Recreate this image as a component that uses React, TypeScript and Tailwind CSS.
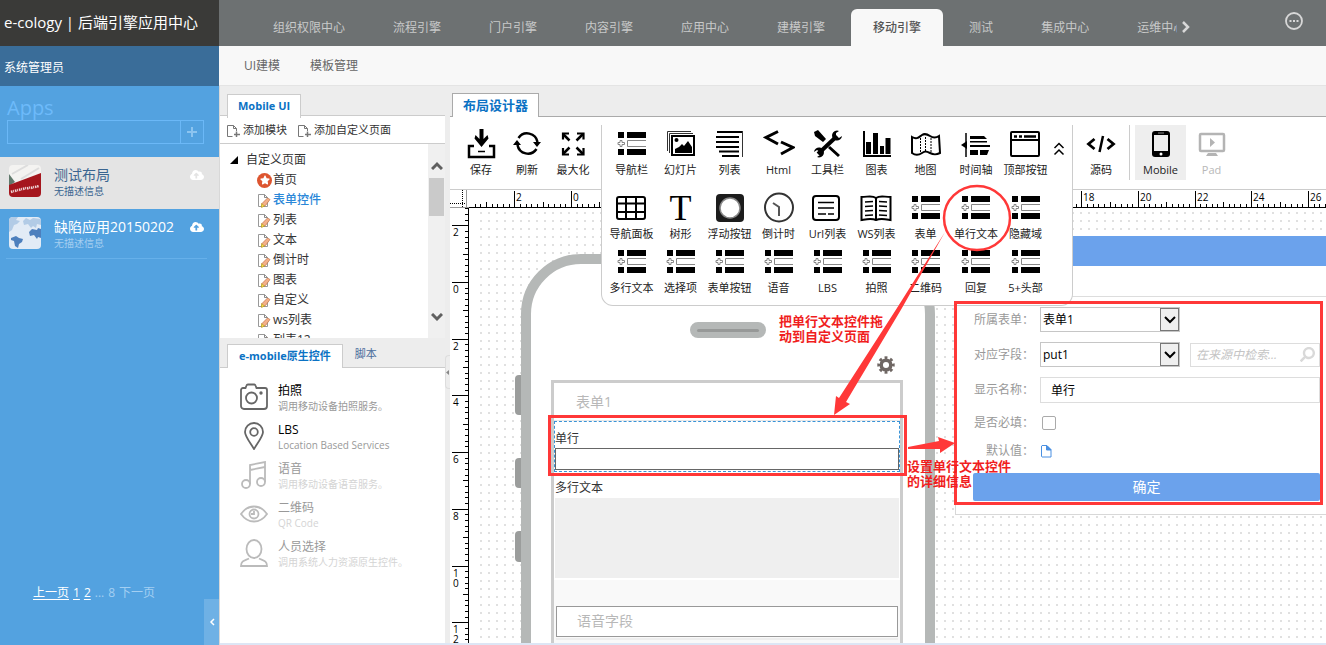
import React from "react";
import { FaStar, FaCloudUploadAlt, FaSearch } from "react-icons/fa";

const NAV_TABS = [
  "组织权限中心",
  "流程引擎",
  "门户引擎",
  "内容引擎",
  "应用中心",
  "建模引擎",
  "移动引擎",
  "测试",
  "集成中心",
  "运维中心",
];

const TREE_PAGES = [
  "表单控件",
  "列表",
  "文本",
  "倒计时",
  "图表",
  "自定义",
  "ws列表",
  "列表12",
];

/* ---------- icons ---------- */

interface IconProps {
  children: React.ReactNode;
}

const Icon32: React.FC<IconProps> = ({ children }) => (
  <svg viewBox="0 0 32 32" width="32" height="32" fill="none" className="shrink-0">
    {children}
  </svg>
);

const FieldIcon = () => (
  <Icon32>
    <path d="M2 4h6v6H2zM11 4h19v6H11zM2 21h6v6H2zM11 21h19v6H11z" fill="#000" />
    <path d="M30 12.500H11.500v6H30" stroke="#888" />
    <path d="M4 12.500h2v2h2.500v2H6v2H4v-2H2v-2h2z" stroke="#888" fill="#fff" />
  </Icon32>
);

const SaveIcon = () => (
  <Icon32>
    <path d="M9 18H4v11h25V18h-5" stroke="#000" strokeWidth="2.500" />
    <path d="M14.500 1h4v10l4-4 1 3.500-7 8.500-7-8.500 1-3.500 4 4z" fill="#000" />
    <path d="M13 23.500h7" stroke="#000" strokeWidth="1.500" />
  </Icon32>
);

const RefreshIcon = () => (
  <Icon32>
    <path d="M7.500 10A10.500 10.500 0 0 1 26.500 14" stroke="#000" strokeWidth="2.500" />
    <path d="M25.500 21A10.500 10.500 0 0 1 6.500 17" stroke="#000" strokeWidth="2.500" />
    <path d="M22 14h8l-4 5zM2 17h8l-4-5z" fill="#000" />
  </Icon32>
);

const MaximizeIcon = () => (
  <Icon32>
    <path
      d="M6 11.500V5.500h6M20 5.500h6.500v6M26.500 20v6.500H20M12 26.500H6V20"
      stroke="#000"
      strokeWidth="2.200"
    />
    <path
      d="M6 6l6.500 6.500M26 6l-6.500 6.500M26 26l-6.500-6.500M6 26l6.500-6.500"
      stroke="#000"
      strokeWidth="2.500"
    />
  </Icon32>
);

const SlidesIcon = () => (
  <Icon32>
    <path d="M2.500 23V3.500H26M4.500 25V5.500H28" stroke="#333" />
    <rect x="7" y="8" width="22" height="19" stroke="#000" strokeWidth="2" />
    <path d="M10 25v-4l4-2 3-3 2 2 4-5 4 6v6z" fill="#000" />
    <circle cx="11.500" cy="12" r="2" fill="#000" />
  </Icon32>
);

const ListIcon = () => (
  <Icon32>
    <path
      d="M3 4h26M2 9h23M2 14h23M2 19h23M5 23.500h20M8 28h17"
      stroke="#000"
      strokeWidth="2"
    />
    <path d="M28.500 3v26" stroke="#333" />
  </Icon32>
);

const HtmlIcon = () => (
  <Icon32>
    <path d="M15 3.500L3 9.500 15 16M18 14l12 5.500L18 26" stroke="#000" strokeWidth="3" />
  </Icon32>
);

const ToolsIcon = () => (
  <Icon32>
    <path d="M2 4l4-2 8 9-3 3-8-6zM18 18l10 9-2 2-10-9z" fill="#000" />
    <path d="M6 26L25 8" stroke="#000" strokeWidth="4" />
    <path
      d="M27 3a5 5 0 1 0 3 5l-3 2-3-2V5zM5 29a5 5 0 1 0-3-5l3-2 3 2v3z"
      fill="#000"
    />
  </Icon32>
);

const ChartIcon = () => (
  <Icon32>
    <path d="M3 3v25h27" stroke="#000" strokeWidth="2" />
    <path d="M5 14h5v12H5zM12 5h5v21h-5zM19 18h4v8h-4zM24.500 10h5v16h-5z" fill="#000" />
  </Icon32>
);

const MapIcon = () => (
  <Icon32>
    <path
      d="M2 9c5 3 7 0 10-2s5-1 8 1 6 2 9 0l1 17c-4 2-6 2-10 0s-5-2-8 0-6 3-10 0z"
      stroke="#000"
      strokeWidth="2"
    />
    <path d="M10.500 10v14M15.500 9v14M21 10v14" stroke="#000" strokeDasharray="2 1" />
  </Icon32>
);

const TimelineIcon = () => (
  <Icon32>
    <path d="M6 5v24" stroke="#000" strokeWidth="1.500" />
    <path d="M1 17l6-4v8z" fill="#000" />
    <path d="M10 8h14l3 3H10zM10 13h17v1.500H10zM10 17h20v2H10zM10 22h8v5h-8zM20 22h9l-2 5h-7z" fill="#000" />
  </Icon32>
);

const WindowIcon = () => (
  <Icon32>
    <rect x="1" y="4" width="28" height="24" rx="1" stroke="#000" strokeWidth="2" />
    <path d="M1 12h28" stroke="#000" strokeWidth="2" />
    <path d="M4 8.500h3M9 8.500h3M14 8.500h12" stroke="#000" strokeWidth="2.500" />
  </Icon32>
);

const TableIcon = () => (
  <Icon32>
    <rect x="1" y="5" width="28" height="22" rx="2" stroke="#000" strokeWidth="2" />
    <path d="M1 11.500h28M1 20h28M10 5v22M20 5v22" stroke="#000" strokeWidth="2" />
  </Icon32>
);

const TextIcon = () => (
  <span className="size-8 flex items-center justify-center font-['Liberation_Serif',serif] text-4xl text-black">
    T
  </span>
);

const FloatIcon = () => (
  <Icon32>
    <rect x="2" y="2" width="28" height="28" rx="4" fill="#1c1c1c" />
    <circle cx="16" cy="16" r="10" fill="#fff" stroke="#888" strokeWidth="1.500" />
  </Icon32>
);

const ClockIcon = () => (
  <Icon32>
    <circle cx="16" cy="15.500" r="14" stroke="#333" strokeWidth="2" />
    <path d="M10 11l6 4v9" stroke="#555" strokeWidth="2" />
  </Icon32>
);

const UrlIcon = () => (
  <Icon32>
    <rect x="2" y="4" width="26" height="24" rx="3" stroke="#000" strokeWidth="2" />
    <path d="M7 10.500h16M7 16h16M7 22h8M17 22h6" stroke="#000" strokeWidth="1.500" />
  </Icon32>
);

const BookIcon = () => (
  <Icon32>
    <path
      d="M16 6C12 3 8 5 1.500 5v23c6-1 10-2 14.500 0 4.500-2 8.500-1 14.500 0V5C24 5 20 3 16 6z"
      stroke="#000"
      strokeWidth="2"
    />
    <path d="M16 6v22" stroke="#000" strokeWidth="2" />
    <path
      d="M5 10l8-.5M5 14.500l8-.5M5 19l8-.5M5 23.500l8-.5M19 9.500l8 .5M19 14l8 .5M19 18.500l8 .5M19 23l8 .5"
      stroke="#000"
      strokeWidth="1.500"
    />
  </Icon32>
);

const CodeIcon = () => (
  <Icon32>
    <path d="M9.500 11l-6 5 6 5M22.500 11l6 5-6 5" stroke="#000" strokeWidth="2.800" />
    <path d="M18 8l-3.500 16" stroke="#000" strokeWidth="2.500" />
  </Icon32>
);

const MobileIcon = () => (
  <Icon32>
    <rect x="7" y="3" width="18" height="26" rx="3" fill="#000" />
    <path d="M9 7h14v16H9z" fill="#eee" />
    <path d="M13 5h6" stroke="#888" />
    <circle cx="16" cy="26" r="1.500" fill="#fff" />
  </Icon32>
);

const PadIcon = () => (
  <Icon32>
    <rect x="4" y="6" width="24" height="17" rx="1" stroke="#b4b4b4" strokeWidth="2.500" />
    <path d="M14 10l5 4.500-5 4.500zM12 25h8l2 3H10z" fill="#b4b4b4" />
  </Icon32>
);

const GearIcon = () => (
  <svg viewBox="0 0 18 18" width="18" height="18" fill="none" stroke="#6f6764">
    <circle cx="9" cy="9" r="4.800" strokeWidth="3.500" />
    <circle cx="9" cy="9" r="7.300" strokeWidth="2.800" pathLength="16" strokeDasharray="1 1" strokeDashoffset="0.5" />
  </svg>
);

const AddPageIcon = () => (
  <svg viewBox="0 0 13 13" width="13" height="13" fill="none" stroke="#777">
    <path d="M5.500 12.500h-5v-11h6l3 3V7M6.500 1.500v3h3" />
    <path d="M9.500 7.500V13M7 10.500h6" strokeWidth="1.500" />
  </svg>
);

const PageIcon = () => (
  <svg viewBox="0 0 14 15" width="14" height="15" fill="none">
    <path d="M1.500 13.500v-12h6l3 3v9z" fill="#fff" stroke="#999" />
    <path d="M7.500 1.500v3h3" stroke="#888" />
    <path d="M10.500 5l2.500 1.500-4.500 6-4 1.500.5-3.500z" fill="#f3b08a" stroke="#c07048" strokeWidth=".7" />
    <path d="M4.500 10.500l3 2.500-3 1.500z" fill="#f4e04a" stroke="#a8901c" strokeWidth=".5" />
  </svg>
);

/* ---------- data for the palette ---------- */

interface Tool {
  label: string;
  icon: React.FC;
}

const PALETTE: Tool[][] = [
  [
    { label: "导航栏", icon: FieldIcon },
    { label: "幻灯片", icon: SlidesIcon },
    { label: "列表", icon: ListIcon },
    { label: "Html", icon: HtmlIcon },
    { label: "工具栏", icon: ToolsIcon },
    { label: "图表", icon: ChartIcon },
    { label: "地图", icon: MapIcon },
    { label: "时间轴", icon: TimelineIcon },
    { label: "顶部按钮", icon: WindowIcon },
  ],
  [
    { label: "导航面板", icon: TableIcon },
    { label: "树形", icon: TextIcon },
    { label: "浮动按钮", icon: FloatIcon },
    { label: "倒计时", icon: ClockIcon },
    { label: "Url列表", icon: UrlIcon },
    { label: "WS列表", icon: BookIcon },
    { label: "表单", icon: FieldIcon },
    { label: "单行文本", icon: FieldIcon },
    { label: "隐藏域", icon: FieldIcon },
  ],
  [
    { label: "多行文本", icon: FieldIcon },
    { label: "选择项", icon: FieldIcon },
    { label: "表单按钮", icon: FieldIcon },
    { label: "语音", icon: FieldIcon },
    { label: "LBS", icon: FieldIcon },
    { label: "拍照", icon: FieldIcon },
    { label: "二维码", icon: FieldIcon },
    { label: "回复", icon: FieldIcon },
    { label: "5+头部", icon: FieldIcon },
  ],
];

interface ToolButtonProps extends Tool {
  className?: string;
}

const ToolButton: React.FC<ToolButtonProps> = ({ label, icon: Glyph, className = "" }) => (
  <button className={`flex flex-col items-center gap-0.5 ${className}`}>
    <Glyph />
    <span className="text-[11px] leading-4 whitespace-nowrap">{label}</span>
  </button>
);

/* ---------- left sidebar ---------- */

const Sidebar = () => (
  <aside className="w-[219px] shrink-0 flex flex-col bg-[#53a2e0] text-white">
    <div className="h-[46px] shrink-0 px-1 pb-0.5 flex items-center bg-[#3a3a38] text-[15px] whitespace-nowrap">
      e-cology | 后端引擎应用中心
    </div>
    <div className="h-10 shrink-0 px-1 pt-1 flex items-center bg-[#3a6d99] text-xs">系统管理员</div>

    <div className="pl-[7px] pr-[15px] pt-2 pb-[13px]">
      <h2 className="h-[26px] leading-7 text-xl text-[#6dbafa]">Apps</h2>
      <div className="h-6 flex border border-[#6bb8f7]">
        <input aria-label="Apps" className="flex-1 min-w-0 bg-transparent outline-none px-1 text-xs" />
        <button
          aria-label="新增"
          className="w-[23px] border-l border-[#6bb8f7] flex items-center justify-center"
        >
          <svg viewBox="0 0 10 10" width="10" height="10" stroke="#8cc4f0" strokeWidth="2">
            <path d="M5 0v10M0 5h10" />
          </svg>
        </button>
      </div>
    </div>

    <ul>
      <li className="h-[52px] pl-[9px] pr-[15px] pt-2 flex bg-[#e4e4e4] text-[#3a6590]">
        <svg viewBox="0 0 32 32" width="32" height="32" className="rounded shrink-0">
          <rect width="32" height="32" fill="#f4f3f1" />
          <path d="M0 9l6 8-6 4z" fill="#60796c" />
          <path d="M3 9L19 0M12 14L30 3" stroke="#ddd" strokeWidth="2" />
          <path d="M0 20L32 8v24H0z" fill="#a5161d" />
          <path
            d="M2 27l3-1M6 26l3-1M10 25l3-1M14 24l3-1M18 23.500l3-1M22 23l3-1M26 22l4-1"
            stroke="#f0dcdc"
            strokeWidth="2.500"
            strokeDasharray="1.500 .7"
          />
        </svg>
        <div className="pl-[13px] flex-1">
          <div className="text-sm leading-5">测试布局</div>
          <div className="text-[10px] leading-3">无描述信息</div>
        </div>
        <FaCloudUploadAlt size={14} className="mt-[3px] text-white" />
      </li>
      <li className="h-[49px] pl-[9px] pr-[15px] pt-2 flex">
        <svg viewBox="0 0 32 32" width="32" height="32" className="rounded shrink-0">
          <rect width="32" height="32" fill="#e2ebf6" />
          <path d="M0 0h9l-2 3 4 1-3 3-3 1-2 5-3 2zM14 4l3-3 4 2 3-2 8 1v6l-4-1-1 4-3-2-2 2-3-4-4 1z" fill="#b2cbe6" />
          <path d="M2 21l5-2 3 2 4 1-1 3-3 2-1 4-3-2-1-5-3-1zM20 15l3-3 5 1 1-2 3 1v9l-3-1-1 2-3-4-4 1z" fill="#4d7fbd" />
        </svg>
        <div className="pl-[13px] flex-1">
          <div className="text-sm leading-5">缺陷应用20150202</div>
          <div className="text-[10px] leading-3 text-[#a5cef0]">无描述信息</div>
        </div>
        <FaCloudUploadAlt size={14} className="mt-[3px] text-white" />
      </li>
    </ul>
    <div className="mx-1.5 mr-3 h-px bg-[#66b0ea]" />

    <div className="mt-auto flex items-end text-xs">
      <nav className="flex-1 pl-[33px] h-[60px] flex gap-1 whitespace-nowrap text-[#a3cff2]">
        <a href="#prev" className="underline underline-offset-2 text-white h-4">上一页</a>
        <a href="#1" className="underline underline-offset-2 text-white h-4">1</a>
        <a href="#2" className="underline underline-offset-2 text-white h-4">2</a>
        <span>...</span>
        <span>8</span>
        <span>下一页</span>
      </nav>
      <button aria-label="收起" className="w-[15px] h-[46px] bg-[#6fb1e5] flex items-center justify-center">
        <svg viewBox="0 0 6 8" width="6" height="8" fill="none" stroke="#fff" strokeWidth="1.500">
          <path d="M5 1L2 4l3 3" />
        </svg>
      </button>
    </div>
  </aside>
);

/* ---------- page tree and native widgets ---------- */

interface NativeItem {
  title: string;
  desc: string;
  enabled: boolean;
  drawing: React.ReactNode;
}

const NATIVE_ITEMS: NativeItem[] = [
  {
    title: "拍照",
    desc: "调用移动设备拍照服务。",
    enabled: true,
    drawing: (
      <>
        <path d="M3 5h2.500l1-2.500a1.500 1.500 0 0 1 1.500-1h6a1.500 1.500 0 0 1 1.500 1L16.500 5H25a2 2 0 0 1 2 2v16a3 3 0 0 1-3 3H4a3 3 0 0 1-3-3V7a2 2 0 0 1 2-2z" />
        <circle cx="11.500" cy="15" r="5.500" />
        <circle cx="21" cy="10" r=".8" />
      </>
    ),
  },
  {
    title: "LBS",
    desc: "Location Based Services",
    enabled: true,
    drawing: (
      <>
        <path d="M14 27C9 19 5 14 5 10a9 9 0 0 1 18 0c0 4-4 9-9 17z" />
        <circle cx="14" cy="10" r="3.800" />
      </>
    ),
  },
  {
    title: "语音",
    desc: "调用移动设备语音服务。",
    enabled: false,
    drawing: (
      <>
        <circle cx="6" cy="23" r="4" />
        <circle cx="21" cy="21" r="4" />
        <path d="M10 23V4l15-3v20M10 9l15-3" />
      </>
    ),
  },
  {
    title: "二维码",
    desc: "QR Code",
    enabled: false,
    drawing: (
      <>
        <path d="M1 14c7-10 19-10 26 0-7 10-19 10-26 0z" />
        <circle cx="14" cy="14" r="4.500" />
        <path d="M14 11v3h-3" />
      </>
    ),
  },
  {
    title: "人员选择",
    desc: "调用系统人力资源原生控件。",
    enabled: false,
    drawing: (
      <>
        <ellipse cx="14" cy="10" rx="7.500" ry="9" />
        <path d="M9 19.500c-4 2-8 2-8 7.500h26c0-5.500-4-5.500-8-7.500" />
      </>
    ),
  },
];

const PagesPanel = () => (
  <section className="w-[225px] shrink-0 flex flex-col bg-white">
    <div className="h-[30px] shrink-0 pl-[7px] pt-1.5 bg-[#ededed] border-b border-[#ccc]">
      <button className="h-6 px-2.5 bg-white border border-b-0 border-[#ccc] text-[11px] font-bold text-[#0b72c4]">
        Mobile UI
      </button>
    </div>
    <div className="h-7 shrink-0 pl-[7px] pt-0.5 flex items-center gap-[11px] border-b border-[#ccc] text-[11px] text-[#333]">
      <button className="flex items-center gap-[3px]">
        <AddPageIcon />
        添加模块
      </button>
      <button className="flex items-center gap-[3px]">
        <AddPageIcon />
        添加自定义页面
      </button>
    </div>

    <div className="h-[194px] shrink-0 flex overflow-hidden">
      <ul className="flex-1 pt-1.5 text-xs leading-5 text-[#333]">
        <li className="h-5 pl-2.5 flex items-center gap-2">
          <svg viewBox="0 0 8 8" width="8" height="8">
            <path d="M8 0v8H0z" fill="#000" />
          </svg>
          自定义页面
        </li>
        <li className="h-5 pl-[37px] flex items-center gap-px">
          <span className="size-[15px] rounded-full bg-[#dd5530] flex items-center justify-center text-white">
            <FaStar size={10} />
          </span>
          首页
        </li>
        {TREE_PAGES.map((name) => (
          <li
            key={name}
            className={`h-5 pl-[37px] flex items-center gap-0.5 ${name === "表单控件" ? "text-[#2a87d8] font-medium" : ""}`}
          >
            <PageIcon />
            {name}
          </li>
        ))}
      </ul>
      <div className="w-[17px] flex flex-col items-center bg-[#f0f0f0] pt-[17px] pb-4">
        <svg viewBox="0 0 12 9" width="12" height="9" fill="none" stroke="#606060" strokeWidth="3">
          <path d="M1 8l5-5 5 5" />
        </svg>
        <div className="mt-2 w-[15px] h-[38px] bg-[#cacaca]" />
        <svg viewBox="0 0 12 9" width="12" height="9" fill="none" stroke="#606060" strokeWidth="3" className="mt-auto">
          <path d="M1 1l5 5 5-5" />
        </svg>
      </div>
    </div>

    <div className="h-[30px] shrink-0 pl-[7px] pt-1.5 flex bg-[#ededed] border-b border-[#ccc] text-[11px]">
      <button className="h-6 px-[11px] bg-white border border-b-0 border-[#ccc] font-bold text-[#0b72c4] whitespace-nowrap">
        e-mobile原生控件
      </button>
      <button className="h-5 px-3 text-[#4a6c9c]">脚本</button>
    </div>
    <ul className="flex-1 min-h-0 overflow-hidden pl-5 pt-[15px] flex flex-col gap-[9px]">
      {NATIVE_ITEMS.map(({ title, desc, enabled, drawing }) => (
        <li key={title} className="h-[30px] flex items-start gap-2.5">
          <svg
            viewBox="0 0 28 28"
            width="28"
            height="28"
            fill="none"
            strokeWidth="1.800"
            stroke={enabled ? "#666" : "#bbb"}
          >
            {drawing}
          </svg>
          <div className="whitespace-nowrap">
            <div className={`text-xs leading-4 ${enabled ? "text-black" : "text-[#999]"}`}>{title}</div>
            <div className={`text-[10px] leading-[14px] ${enabled ? "text-[#999]" : "text-[#d4d4d4]"}`}>
              {desc}
            </div>
          </div>
        </li>
      ))}
    </ul>
  </section>
);

/* ---------- rulers ---------- */

const STEP = 5.67;

const HorizontalRuler = () => {
  const ticks = Array.from({ length: 260 }, (_, i) => i - 17);
  return (
    <svg width="100%" height="18" className="flex-1 min-w-0" shapeRendering="crispEdges">
      {ticks.map((n) => {
        const x = Math.round(102 + n * STEP) + 0.5;
        const top = n % 10 === 0 ? 1 : n % 5 === 0 ? 12 : 14;
        return <line key={n} x1={x} x2={x} y1={top} y2="18" stroke="#000" />;
      })}
      {ticks
        .filter((n) => n % 10 === 0)
        .map((n) => (
          <text key={n} x={Math.round(102 + n * STEP) + 2} y="11" fontSize="10" fill="#000">
            {Math.abs(n / 5)}
          </text>
        ))}
      <line x1="0" x2="100%" y1="17.500" y2="17.500" stroke="#000" />
    </svg>
  );
};

const VerticalRuler = () => {
  const ticks = Array.from({ length: 140 }, (_, i) => i - 13);
  return (
    <svg width="19" height="100%" className="shrink-0" shapeRendering="crispEdges">
      {ticks.map((n) => {
        const y = Math.round(74 + n * STEP) + 0.5;
        const left = n % 10 === 0 ? 2 : n % 5 === 0 ? 13 : 15;
        return <line key={n} x1={left} x2="19" y1={y} y2={y} stroke="#000" />;
      })}
      {ticks
        .filter((n) => n % 10 === 0)
        .map((n) => (
          <text key={n} fontSize="10" fill="#000">
            {String(Math.abs(n / 5))
              .split("")
              .map((digit, i) => (
                <tspan key={i} x="3" y={Math.round(74 + n * STEP) + 11 + i * 10}>
                  {digit}
                </tspan>
              ))}
          </text>
        ))}
      <line x1="18.500" x2="18.500" y1="0" y2="100%" stroke="#000" />
    </svg>
  );
};

/* ---------- phone on the canvas ---------- */

const Phone = () => (
  <div className="absolute left-[52px] top-[46px] -bottom-20 w-[414px] border-[10px] border-[#b5b8b7] rounded-[60px] bg-white pt-[58px]">
    <div className="absolute -left-4 top-[111px] w-1.5 h-10 rounded-l bg-[#9b9d9c]" />
    <div className="absolute -left-4 top-[194px] w-1.5 h-[30px] rounded-l bg-[#9b9d9c]" />
    <div className="absolute -left-4 top-[267px] w-1.5 h-[31px] rounded-l bg-[#9b9d9c]" />

    <div className="mx-auto w-[76px] h-4 rounded-full bg-[#b5b8b7] flex items-center justify-center">
      <div className="w-[62px] h-[3px] rounded bg-[#979998]" />
    </div>
    <div className="h-[42px] pr-[30px] pb-1.5 flex items-end justify-end">
      <button aria-label="设置">
        <GearIcon />
      </button>
    </div>

    <div className="ml-5 w-[352px] h-full border-[3px] border-[#ccc] text-xs text-[#333] bg-white">
      <div className="h-[38px] pl-[22px] flex items-center text-sm text-[#b8b8b8] border-b border-[#e8e8e8]">
        表单1
      </div>
      <div className="h-[51px] pt-2 border border-dashed border-[#3a93d6]">
        <label htmlFor="single" className="block h-[18px] leading-[18px]">单行</label>
        <input id="single" className="block w-[344px] h-[22px] border border-[#666] px-1 outline-none" />
      </div>
      <label htmlFor="multi" className="block h-[26px] pt-2 pl-px leading-4">多行文本</label>
      <textarea id="multi" className="block ml-px w-[344px] h-20 bg-[#efefef] resize-none outline-none" />
      <div className="mt-0.5 pt-[26px] pb-1 px-0.5 bg-[#f9f9f9] h-40">
        <input
          aria-label="语音字段"
          placeholder="语音字段"
          className="block w-full h-[31px] px-5 pb-0.5 border border-[#999] bg-white text-sm outline-none placeholder:text-[#b8b8b8]"
        />
        <div className="mt-px h-0.5 bg-[#eee]" />
      </div>
    </div>
  </div>
);

/* ---------- field settings ---------- */

interface DropDownProps {
  id: string;
  value: string;
}

const DropDown: React.FC<DropDownProps> = ({ id, value }) => (
  <div className="relative w-[140px] h-[25px] shrink-0">
    <select id={id} className="appearance-none size-full pl-0.5 border border-[#c6c6c6] bg-white text-xs text-black">
      <option>{value}</option>
    </select>
    <span className="pointer-events-none absolute right-px top-px w-[19px] h-[23px] border border-[#777] bg-[#efefef] flex items-center justify-center">
      <svg viewBox="0 0 12 8" width="12" height="8" fill="none" stroke="#000" strokeWidth="2">
        <path d="M1 1l5 5 5-5" />
      </svg>
    </span>
  </div>
);

const LABEL = "w-[67px] shrink-0 pr-1.5 text-right whitespace-nowrap";

const FieldSettings = () => (
  <form
    className="absolute left-[486px] right-0 top-7 bg-white border-l border-b border-[#d8d8d8] text-xs text-[#999]"
    onSubmit={(e) => e.preventDefault()}
  >
    <div className="h-[30px] bg-[#6ba2ec]" />
    <div className="h-[31px] border-b border-[#ddd]" />
    <div className="pl-[17px] pr-1.5 pt-2.5 pb-[13px]">
      <div className="h-[25px] flex items-center">
        <label htmlFor="form" className={LABEL}>所属表单：</label>
        <DropDown id="form" value="表单1" />
      </div>
      <div className="mt-2.5 h-[25px] flex items-center">
        <label htmlFor="field" className={LABEL}>对应字段：</label>
        <DropDown id="field" value="put1" />
        <div className="ml-2.5 flex-1 min-w-0 h-6 pl-[5px] pr-1 flex items-center border border-[#ddd]">
          <input
            aria-label="在来源中检索"
            placeholder="在来源中检索..."
            className="flex-1 min-w-0 italic outline-none placeholder:text-[#c4c4c4]"
          />
          <FaSearch size={15} className="-scale-x-100 text-[#d9d9d9]" />
        </div>
      </div>
      <div className="mt-2.5 h-[26px] flex items-center">
        <label htmlFor="name" className={LABEL}>显示名称：</label>
        <input id="name" defaultValue="单行" className="flex-1 min-w-0 h-[26px] px-2.5 border border-[#ddd] text-black outline-none" />
      </div>
      <div className="mt-[9px] h-[22px] flex items-center">
        <label htmlFor="required" className={LABEL}>是否必填：</label>
        <input id="required" type="checkbox" className="appearance-none ml-0.5 size-[14px] border border-[#aaa] rounded-xs bg-white" />
      </div>
      <div className="mt-1.5 h-[22px] flex items-center">
        <span className={LABEL}>默认值：</span>
        <button type="button" aria-label="默认值">
          <svg viewBox="0 0 12 13" width="12" height="13" fill="none" stroke="#4a90e2">
            <path d="M2 .5h5l4 4v7.500H2a1 1 0 0 1-.5-1V1z" />
            <path d="M6.500.5l4.500 4.500H6.500z" fill="#4a90e2" />
          </svg>
        </button>
      </div>
      <button className="mt-[11px] w-full h-7 rounded-xs bg-[#6ba2ec] text-sm text-white">确定</button>
    </div>
  </form>
);

/* ---------- red guide marks over the designer ---------- */

const GuideMarks = () => (
  <div className="pointer-events-none absolute left-0 top-0 text-[13px] leading-[15px] font-bold text-[#f01e1e]">
    <svg viewBox="450 117 876 526" width="876" height="526" fill="none" stroke="#ff3838" strokeWidth="3">
      <ellipse cx="977" cy="218" rx="33" ry="32" strokeWidth="2.500" />
      <rect x="549.500" y="416.500" width="356" height="58" />
      <rect x="955.500" y="302.500" width="366" height="201" />
      <path
        d="M945 232L897 308 839 398 836 396 834 415 850 404 846 402 902 308z"
        fill="#ff3838"
        stroke="none"
      />
      <path d="M908 447L939 441 938 437 955 443 940 453 940 449 908 449z" fill="#ff3838" stroke="none" />
    </svg>
    <p className="absolute left-[329px] top-[197px] w-[106px]">把单行文本控件拖动到自定义页面</p>
    <p className="absolute left-[457px] top-[342px] w-[106px]">设置单行文本控件的详细信息</p>
  </div>
);

/* ---------- designer ---------- */

const Designer = () => (
  <section className="flex-1 min-w-0 flex flex-col">
    <div className="h-[31px] shrink-0 pl-0.5 pt-1.5 border-b border-[#aaa]">
      <button className="h-[25px] px-2.5 bg-white border border-b-0 border-[#aaa] text-[13px] font-bold text-[#0b72c4]">
        布局设计器
      </button>
    </div>

    <div className="relative flex-1 min-h-0 flex flex-col bg-white overflow-hidden">
      <div className="relative z-10 h-[73px] shrink-0 pt-2 pl-2 flex items-start border-b border-[#ccc] text-[#222]">
        <ToolButton label="保存" icon={SaveIcon} className="w-[46px] mt-[3px]" />
        <ToolButton label="刷新" icon={RefreshIcon} className="w-[46px] mt-[3px]" />
        <ToolButton label="最大化" icon={MaximizeIcon} className="w-[46px] mt-[3px]" />

        <div className="relative ml-[5px] w-[472px] shrink-0">
          <div className="absolute inset-x-0 top-0 h-[181px] pl-[5px] pt-[3px] flex items-start bg-white border border-t-0 border-[#ccc] rounded-b-xl">
            <div>
              {PALETTE.map((row, i) => (
                <div
                  key={i}
                  className={`grid grid-cols-[repeat(7,49px)_52px_47px] justify-items-center ${
                    i === 1 ? "mt-3.5" : i === 2 ? "mt-1" : ""
                  }`}
                >
                  {row.map((tool) => (
                    <ToolButton key={tool.label} {...tool} />
                  ))}
                </div>
              ))}
            </div>
            <button aria-label="收起工具" className="mt-3.5 ml-1">
              <svg viewBox="0 0 12 14" width="12" height="14" fill="none" stroke="#000" strokeWidth="1.500">
                <path d="M1.500 6L6 1.500 10.500 6M1.500 12.500L6 8l4.500 4.500" />
              </svg>
            </button>
          </div>
        </div>

        <ToolButton label="源码" icon={CodeIcon} className="w-14 mt-[3px]" />
        <div className="w-px h-[55px] bg-[#ccc]" />
        <ToolButton label="Mobile" icon={MobileIcon} className="ml-[5px] w-[51px] h-[55px] pt-[3px] bg-[#eee]" />
        <ToolButton label="Pad" icon={PadIcon} className="w-[51px] mt-[3px] text-[#b8b8b8]" />
      </div>

      <div className="h-[18px] shrink-0 flex">
        <svg width="19" height="18" fill="none" className="shrink-0">
          <path d="M12.500 0v18M0 13.500h17" stroke="#000" strokeDasharray="1 1" />
          <path d="M16.500 0v18M0 17.500h19" stroke="#999" />
        </svg>
        <HorizontalRuler />
      </div>

      <div className="flex-1 min-h-0 flex">
        <VerticalRuler />
        <div className="relative flex-1 min-w-0 overflow-hidden pl-[11px]">
          <div className="h-full bg-[conic-gradient(from_270deg_at_2px_2px,#e0e0e0_90deg,transparent_0)] bg-[length:8px_8px] bg-[position:0px_4px]" />
          <Phone />
          <FieldSettings />
        </div>
      </div>

      <div className="absolute inset-0 z-20 pointer-events-none">
        <GuideMarks />
      </div>
    </div>
  </section>
);

/* ---------- page ---------- */

const App = () => (
  <div className="flex h-screen overflow-hidden font-['Open_Sans','Noto_Sans_CJK_SC',sans-serif]">
    <Sidebar />
    <main className="flex-1 min-w-0 flex flex-col border-l border-[#d8d8d8] bg-[#ededed]">
      <header className="h-[46px] shrink-0 -ml-px pl-[30px] pr-[23px] flex bg-[#6d7172] text-xs">
        <nav className="flex-1 min-w-0 flex items-end overflow-hidden">
          {NAV_TABS.map((tab) => (
            <a
              key={tab}
              href="#tab"
              className={`shrink-0 h-[37px] leading-[37px] whitespace-nowrap ${
                tab === "移动引擎"
                  ? "mx-0.5 px-[22px] rounded-t-md bg-[#f8f8f8] text-[#555] font-medium"
                  : "px-6 text-[#c8c9c9]"
              }`}
            >
              {tab}
            </a>
          ))}
        </nav>
        <button aria-label="更多" className="ml-1 mt-[21px] mr-[94px] w-2.5 h-3">
          <svg viewBox="0 0 10 12" width="10" height="12" fill="none" stroke="#d8d8d8" strokeWidth="2.500">
            <path d="M2 1l5 5-5 5" />
          </svg>
        </button>
        <button aria-label="菜单" className="mt-3 size-[18px]">
          <svg viewBox="0 0 18 18" width="18" height="18" fill="none" stroke="#d8d8d8" strokeWidth="1.800">
            <circle cx="9" cy="9" r="8" />
            <path d="M4.500 9h2M8 9h2M11.500 9h2" strokeWidth="2" />
          </svg>
        </button>
      </header>
      <nav className="h-10 shrink-0 -ml-px pl-[25px] flex items-center gap-[30px] bg-[#f8f8f8] border-b border-[#e4e4e4] text-xs text-[#666]">
        <a href="#ui">UI建模</a>
        <a href="#template">模板管理</a>
      </nav>
      <div className="flex-1 min-h-0 flex">
        <PagesPanel />
        <button aria-label="折叠" className="w-[5px] shrink-0 mt-[269px] h-[34px] border border-r-0 border-[#ddd] rounded-l">
          <svg viewBox="0 0 3 5" width="3" height="5">
            <path d="M3 0v5L0 2.500z" fill="#888" />
          </svg>
        </button>
        <Designer />
      </div>
      <footer className="h-0.5 shrink-0 bg-[#dde6f5]" />
    </main>
  </div>
);

export default App;
